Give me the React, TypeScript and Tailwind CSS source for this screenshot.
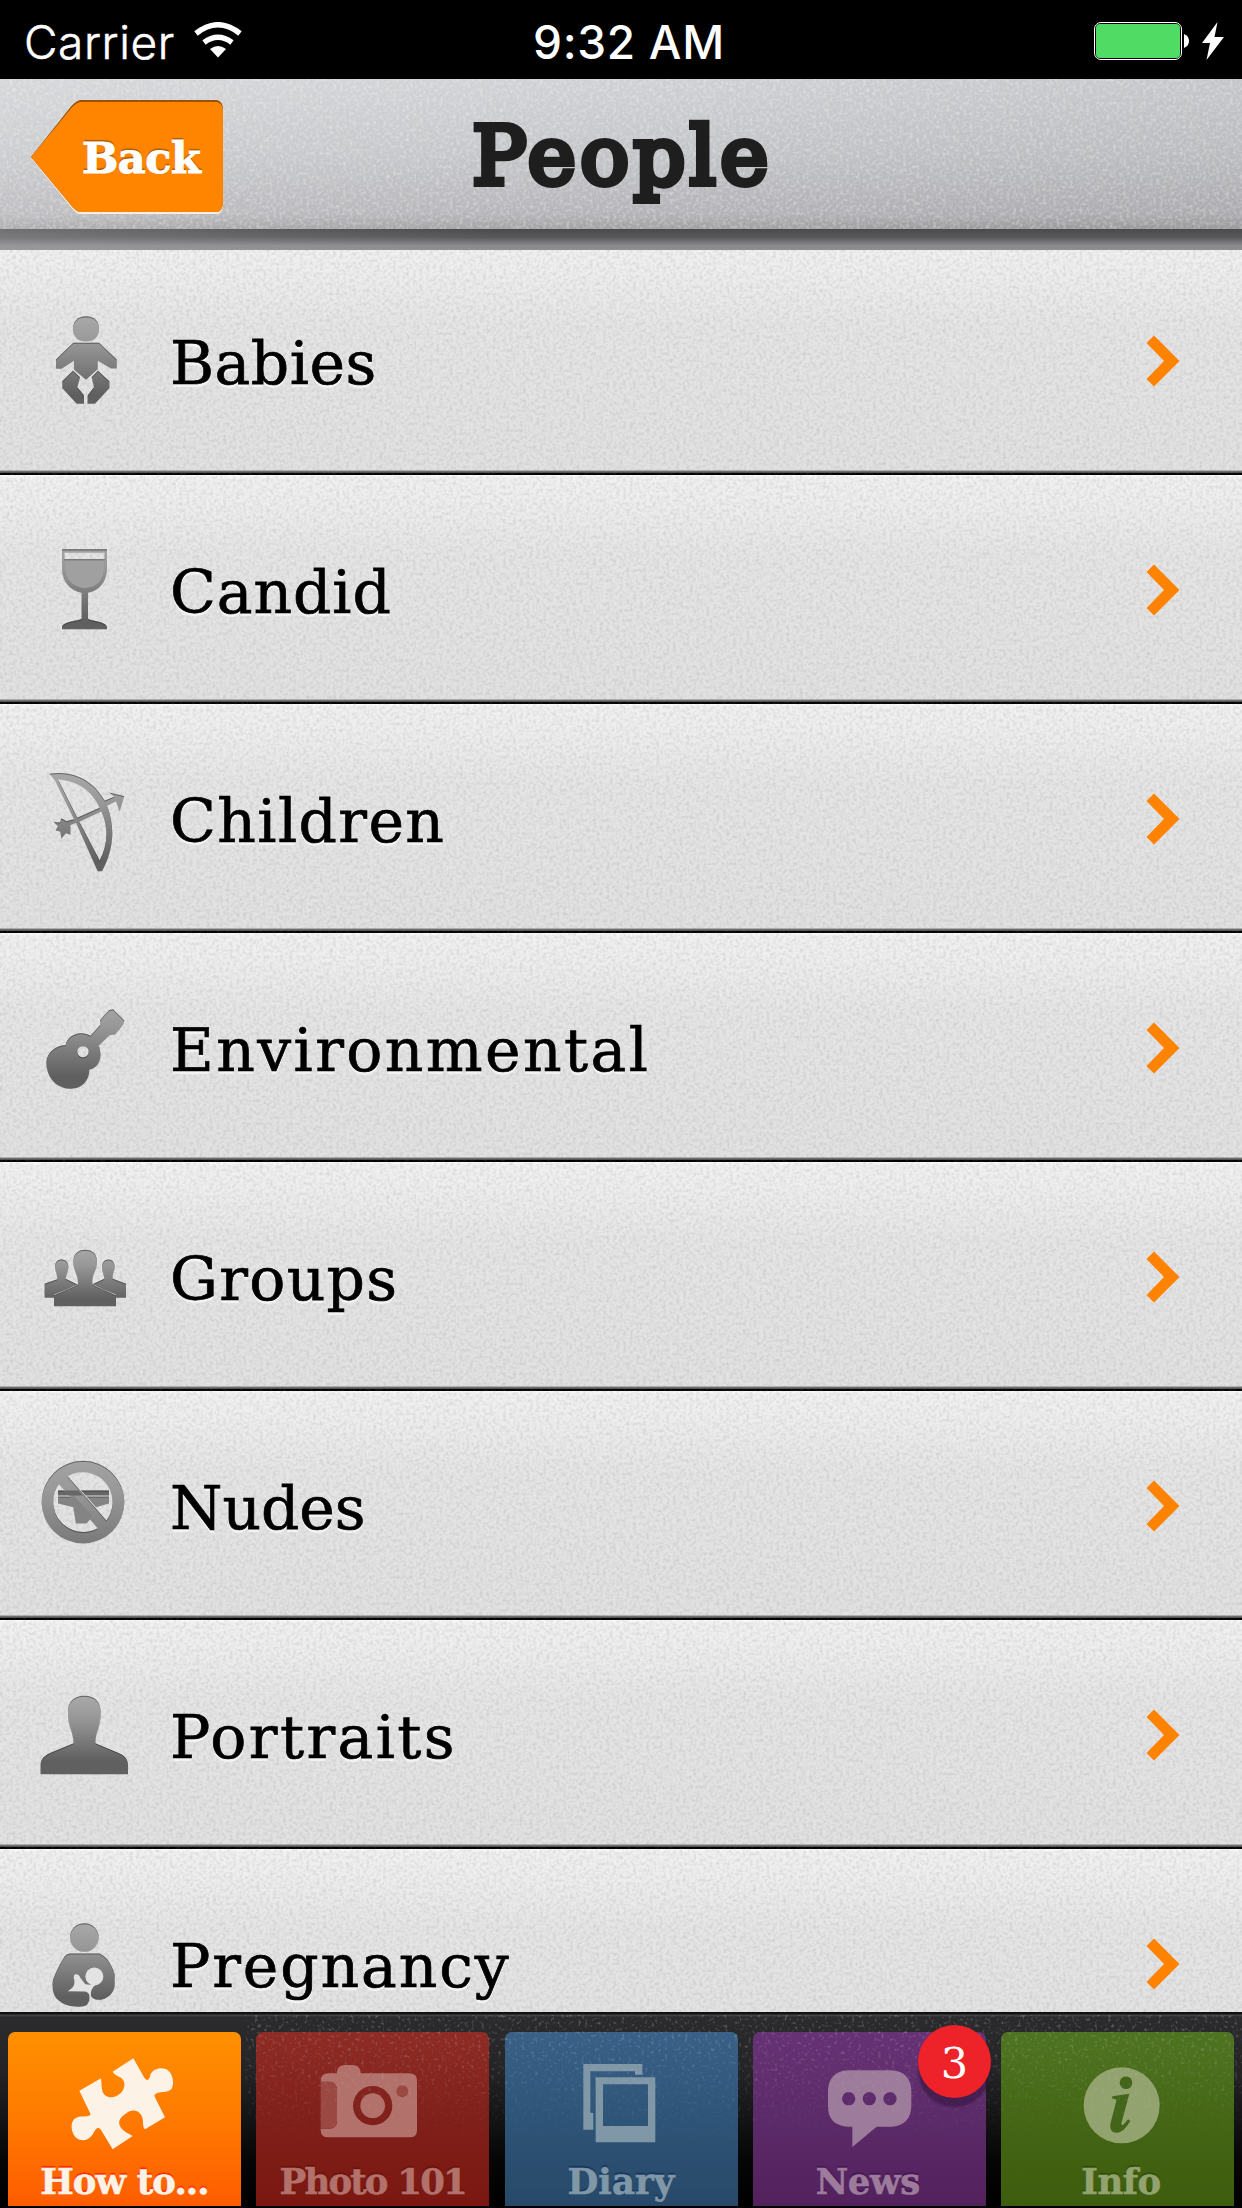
import type { ReactNode } from 'react';

const serif = "font-['DejaVu_Serif','Noto_Serif',serif]";

function Grain({ id, frequency, matrix }: { id: string; frequency: string; matrix: string }) {
  return (
    <svg className="pointer-events-none absolute inset-0 h-full w-full" aria-hidden="true">
      <filter id={id} x="0" y="0" width="100%" height="100%" colorInterpolationFilters="sRGB">
        <feTurbulence type="fractalNoise" baseFrequency={frequency} numOctaves={2} seed={4} />
        <feColorMatrix type="matrix" values={matrix} />
      </filter>
      <rect width="100%" height="100%" filter={`url(#${id})`} />
    </svg>
  );
}

function SharedDefs() {
  return (
    <svg className="absolute h-0 w-0" aria-hidden="true">
      <defs>
        <filter id="inset" x="-10%" y="-10%" width="120%" height="120%" colorInterpolationFilters="sRGB">
          <feOffset in="SourceAlpha" dy="4" result="o" />
          <feComposite in="SourceAlpha" in2="o" operator="out" result="edge" />
          <feFlood floodColor="#222" floodOpacity="0.5" />
          <feComposite in2="edge" operator="in" result="dark" />
          <feMerge>
            <feMergeNode in="SourceGraphic" />
            <feMergeNode in="dark" />
          </feMerge>
        </filter>
      </defs>
    </svg>
  );
}

function RowIcon({ id, y, from, to, children }: { id: string; y: number; from: number; to: number; children: ReactNode }) {
  return (
    <svg className="relative z-10 ml-[30px] h-[100px] w-[100px] shrink-0 overflow-visible" viewBox={`90 ${y} 300 300`}>
      <linearGradient id={id} gradientUnits="userSpaceOnUse" x1="0" x2="0" y1={from} y2={to}>
        <stop offset="0" stopColor="#a9a9a9" />
        <stop offset="0.3" stopColor="#989898" />
        <stop offset="0.9" stopColor="#5f5f5f" />
        <stop offset="1" stopColor="#606060" />
      </linearGradient>
      <g fill={`url(#${id})`} filter="url(#inset)">
        {children}
      </g>
    </svg>
  );
}

const rows = [
  {
    label: 'Babies',
    spacing: 'tracking-[0.5px]',
    icon: (
      <RowIcon id="g1" y={91.5} from={107} to={370}>
        <path d="M258 107C283 107 297 122 297 146C297 169 282 183 258 183C234 183 219 169 219 146C219 122 233 107 258 107Z" />
        <path d="M220 187H297L350 237V264H333L293 241V266L258 298L222 268V241L185 265H168V237Z" />
        <path d="M219 271L240 290L232 320L252 345V370H230L187 323V302Z" />
        <path d="M294 271L275 290L282 320L263 345V370H285L328 323V302Z" />
      </RowIcon>
    ),
  },
  {
    label: 'Candid',
    spacing: 'tracking-[0.9px]',
    icon: (
      <RowIcon id="g2" y={778.5} from={780} to={1045}>
        <path fillRule="evenodd" d="M186 806H321V862C321 905 298 931 264 937V1014C267 1022 321 1022 321 1041V1046H186V1041C186 1022 240 1022 245 1014V937C210 931 186 905 186 862ZM193 817V836H314V817Z" />
        <path d="M196 841H312V868C308 905 285 921 255 923C220 920 199 900 196 868Z" fill="#a0a0a0" />
      </RowIcon>
    ),
  },
  {
    label: 'Children',
    spacing: 'tracking-[1.4px]',
    icon: (
      <RowIcon id="g3" y={85.5} from={97} to={392}>
        <path fillRule="evenodd" d="M148 100C225 88 283 125 314 181L342 169L328 156L373 167L359 213L348 183L321 196C347 263 340 330 306 392H293L228 247L211 254V283L198 278L184 295L181 274L167 270L174 258L162 245L180 246L184 233L200 242L222 236L165 120ZM174 117L232 232L299 202C277 153 235 121 174 117ZM238 244L299 360C325 311 325 258 304 213Z" />
      </RowIcon>
    ),
  },
  {
    label: 'Environmental',
    spacing: 'tracking-[2.4px]',
    icon: (
      <RowIcon id="g4" y={772.5} from={780} to={1035}>
        <path fillRule="evenodd" d="M339 806L373 840C372 857 354 870 346 882L329 884L296 916C308 948 300 982 268 988C268 1020 246 1045 215 1045C168 1045 139 1010 139 965C142 934 168 914 197 914C201 884 242 867 272 886L301 853L300 839L327 809ZM249 917A17 17 0 1 0 249 951A17 17 0 1 0 249 917Z" />
      </RowIcon>
    ),
  },
  {
    label: 'Groups',
    spacing: 'tracking-[1.3px]',
    icon: (
      <RowIcon id="g5" y={49.5} from={110} to={285}>
        <path d="M185 147C199 147 206 158 205 172C204 184 199 192 197 205L232 222L200 237L163 252V262H134V220L172 206C172 190 165 182 165 168C165 155 173 147 185 147Z" />
        <path d="M325 147C338 147 345 158 344 171C343 184 336 190 338 205L378 220V262H348V252L310 237L278 221L313 205C312 192 306 184 306 170C306 157 313 147 325 147Z" />
        <path d="M256 118C279 118 291 132 291 155C291 182 275 190 277 222L348 254V287H162V254L234 222C235 191 220 182 220 155C220 132 233 118 256 118Z" />
      </RowIcon>
    ),
  },
  {
    label: 'Nudes',
    spacing: 'tracking-[-0.1px]',
    icon: (
      <RowIcon id="g6" y={736.5} from={700} to={1180}>
        <path fillRule="evenodd" d="M249 751A124 124 0 1 0 249 999A124 124 0 1 0 249 751ZM249 785A90 90 0 0 1 319 930L203 797A88 88 0 0 1 249 785ZM177 821A90 90 0 0 0 293 953Z" />
        <path d="M174 840H235L248 855H174ZM243 840H327V855H257Z" fill="#666" />
        <path d="M174 858H224L240 876L277 918L260 939H228L220 890L174 879ZM260 858H327V879L288 890Z" fill="#848484" />
      </RowIcon>
    ),
  },
  {
    label: 'Portraits',
    spacing: 'tracking-[2.4px]',
    icon: (
      <RowIcon id="g7" y={73.5} from={107} to={325}>
        <path d="M253 106C285 106 302 125 302 155C303 199 286 215 286 248L350 275C375 285 384 296 384 315V341H122V315C122 296 132 285 156 275L221 248C221 216 203 199 204 155C204 125 221 106 253 106Z" />
      </RowIcon>
    ),
  },
  {
    label: 'Pregnancy',
    spacing: 'tracking-[1.9px]',
    icon: (
      <RowIcon id="g8" y={760.5} from={788} to={1035}>
        <circle cx="253" cy="831" r="43" />
        <path d="M210 879H298C322 887 339 922 344 943V976C342 1000 318 1020 295 1018C283 1018 274 1010 270 1004C270 1017 266 1027 260 1034C240 1043 210 1039 190 1030C164 1015 156 1000 158 965C160 950 178 914 190 895Q197 880 210 879Z" />
        <g fill="#e3e3e3">
          <path d="M223 943C231 939 238 944 241 952L256 971L286 974C275 982 270 995 274 1010L268 1018C270 1006 268 996 256 993L203 992C219 983 228 973 221 951Z" />
          <circle cx="283" cy="948" r="27" />
        </g>
      </RowIcon>
    ),
  },
];

function Row({ label, spacing, icon }: { label: string; spacing: string; icon: ReactNode }) {
  return (
    <li className="flex h-[229px] items-center bg-[linear-gradient(to_bottom,#fdfdfd_0px,#f0f0f0_3px,#eeeeee_25px,#e5e5e5_80px,#e1e1e1_224px,#7d7d7d_225px,#444_227px,#000_227px)]">
      {icon}
      <span
        className={`relative z-10 ml-[40px] pt-[5px] text-[60px] leading-none text-black [-webkit-text-stroke:0.7px_#000] [text-shadow:0_3px_1px_#f4f4f4] ${serif} ${spacing}`}
      >
        {label}
      </span>
      <svg className="relative z-10 mr-[62px] ml-auto h-[52px] w-[34px]" viewBox="0 0 34 52">
        <path d="M8 .5L33.5 26L8 51.500L.5 44L18 26L.5 8Z" fill="#ff8300" />
      </svg>
    </li>
  );
}

function StatusBar() {
  return (
    <div className="flex h-[79px] items-center bg-black font-['Inter',sans-serif] text-[46px] leading-none text-white">
      <div className="flex w-[533px] items-center pt-1 pl-[24px]">
        <span className="w-[170px] font-light tracking-[0.6px] [-webkit-text-stroke:0.5px_#fff]">Carrier</span>
        <svg className="-mt-1 h-[36px] w-[48px]" viewBox="0 0 48 36" fill="none" stroke="#fff">
          <path d="M2 11.500Q24 -6 46 11.500" strokeWidth="5.500" />
          <path d="M10 20.500Q24 10 38 20.500" strokeWidth="5.500" />
          <path d="M16 27Q24 21 32 27L24 35.500Z" fill="#fff" stroke="none" />
        </svg>
      </div>
      <span className="pt-1 font-medium tracking-[0.7px] whitespace-nowrap">9:32 AM</span>
      <div className="mr-[18px] ml-auto flex items-center pt-[3px]">
        <div className="h-[38px] w-[88px] rounded-[7px] border-[1.500px] border-white p-px">
          <div className="h-full w-full rounded-[4px] bg-[#4fdb64]" />
        </div>
        <svg className="ml-[2px] h-[14px] w-[5px]" viewBox="0 0 5 14">
          <path d="M0 0Q5 2 5 7Q5 12 0 14Z" fill="#fff" />
        </svg>
        <svg className="ml-[13px] h-[38px] w-[22px]" viewBox="0 0 22 38">
          <path d="M15.500 0L12.500 15H22L4.500 38L8 21H0Z" fill="#fff" />
        </svg>
      </div>
    </div>
  );
}

function Header() {
  return (
    <header className="relative z-20 h-[171px]">
      <div className="relative h-[150px] overflow-hidden bg-[linear-gradient(to_bottom,#d0d1d4,#c4c5c8_50%,#b4b4b8_90%,#a1a1a4)]">
        <div className="absolute inset-0 bg-[linear-gradient(to_right,rgba(255,255,255,0.15),transparent_50%,rgba(0,0,0,0.05))]" />
        <Grain id="metal" frequency="0.3" matrix="0 0 0 0 1  0 0 0 0 1  0 0 0 0 1  0.800 0 0 0 -0.340" />
        <div className="relative grid h-full grid-cols-[1fr_auto_1fr]">
          <button className="relative mt-[21px] ml-[31px] h-[114px] w-[192px] text-left">
            <svg className="absolute inset-0" width="192" height="114" viewBox="0 0 192 114">
              <path d="M49 2H186Q192 3 192 10V106Q191 113 186 114H49Q44 113 39 106L0 58L38 10Q43 3 49 2Z" fill="#f7efe4" />
              <path d="M49 0H186Q192 2 192 9V104Q191 111 186 112H49Q44 111 39 104L0 57L38 9Q43 2 49 0Z" fill="#9a5200" />
              <path d="M49 2H186Q192 4 192 11V104Q191 111 186 112H49Q44 111 39 104L0 57L38 11Q43 4 49 2Z" fill="#ff8501" />
            </svg>
            <span
              className={`relative block pt-[2px] pl-[51px] text-[43px] font-bold tracking-[-0.5px] text-white [-webkit-text-stroke:1px_#fff] [text-shadow:0_-2px_1px_rgba(120,60,0,0.6)] ${serif}`}
            >
              Back
            </span>
          </button>
          <h1 className={`pt-[20px] pl-[3px] text-[81px] leading-[114px] font-normal tracking-[4.500px] text-[#1e1e1e] [-webkit-text-stroke:6.200px_#1e1e1e] ${serif}`}>People</h1>
          <span />
        </div>
      </div>
      <div className="relative h-[21px] bg-[linear-gradient(to_bottom,#4a4a4c,#59595b_40%,#8b8b8d_80%,#8e8e90)]">
        <div className="h-full bg-[linear-gradient(to_right,rgba(170,170,172,0.4),transparent_40%)]" />
      </div>
    </header>
  );
}

const tabs = [
  {
    label: 'How to...',
    box: '24 96 699 360',
    tone: 'bg-[linear-gradient(to_bottom,#ff9000,#ff7a00_50%,#ff5c00)]',
    ink: 'text-[#fcf3e6] [text-shadow:0_-2px_1px_#ff2a00]',
    spacing: 'tracking-[-0.900px]',
    icon: (
      <path d="M238 272L303 235C306 256 303 276 315 286C342 305 378 275 373 248C368 226 346 232 338 215L400 175L430 228C440 248 449 240 451 225C460 203 490 200 505 212C521 225 522 255 515 266C498 284 470 268 463 288L495 352L435 388C426 380 432 365 426 350C415 325 390 330 380 339C359 352 352 365 362 382C370 395 385 400 398 408L338 448L303 390C290 374 284 395 277 405C262 425 240 425 225 410C213 395 211 370 222 358C240 342 265 356 272 343Z" />
    ),
  },
  {
    label: 'Photo 101',
    box: '768 96 699 360',
    tone: 'bg-[linear-gradient(to_bottom,#8e2b25,#80201a_50%,#7a1710)]',
    ink: 'text-[#b2716a] [text-shadow:0_-2px_1px_#6d120c]',
    spacing: 'tracking-[-1.800px]',
    icon: (
      <>
        <path fillRule="evenodd" d="M1011 220Q1011 195 1035 195H1060Q1082 197 1082 220H1230Q1251 222 1251 243V392Q1250 411 1230 412H985Q963 411 962 392V386H990Q1011 384 1011 362V270Q1010 246 990 245H962Q962 220 985 220ZM1118 258A59 59 0 1 0 1118 376A59 59 0 1 0 1118 258Z" />
        <circle cx="1118" cy="317" r="37" />
        <circle cx="1207" cy="274" r="18" fill="#9b4842" />
        <path d="M962 245H990Q1011 246 1011 270V362Q1010 386 990 386H962Z" fill="#9b4842" />
      </>
    ),
  },
  {
    label: 'Diary',
    box: '45 96 699 360',
    tone: 'bg-[linear-gradient(to_bottom,#3a6087,#2e5477_50%,#284969)]',
    ink: 'text-[#7f97a6] [text-shadow:0_-2px_1px_#183461]',
    spacing: 'tracking-[0.1px]',
    icon: <path fillRule="evenodd" d="M280 192H457V224H435V214H301V338H310V389H280ZM317 232H496V427H317ZM339 253V378H474V253Z" />,
  },
  {
    label: 'News',
    box: '789 96 699 360',
    tone: 'bg-[linear-gradient(to_bottom,#673274,#5b2a68_50%,#53225d)]',
    ink: 'text-[#9d7b9b] [text-shadow:0_-2px_1px_#451357]',
    spacing: 'tracking-[-0.4px] pr-[3px]',
    icon: (
      <path
        fillRule="evenodd"
        d="M1075 211H1203Q1264 215 1264 275V318Q1262 378 1203 380H1160L1087 441V380H1075Q1014 378 1014 318V275Q1014 215 1075 211ZM1076 276A20 20 0 1 0 1076 316A20 20 0 1 0 1076 276ZM1138 276A20 20 0 1 0 1138 316A20 20 0 1 0 1138 276ZM1200 276A20 20 0 1 0 1200 316A20 20 0 1 0 1200 276Z"
      />
    ),
  },
  {
    label: 'Info',
    box: '303 96 699 360',
    tone: 'bg-[linear-gradient(to_bottom,#4f7421,#446615_50%,#3e5d0e)]',
    ink: 'text-[#93a36f] [text-shadow:0_-2px_1px_#304d08]',
    spacing: 'tracking-[-0.5px] pl-[7px]',
    icon: (
      <>
        <circle cx="665" cy="316" r="114" />
        <g fill="#43651a">
          <circle cx="678" cy="248" r="19" />
          <path d="M637 289L688 281L665 367C662 380 670 378 684 358L691 362C676 388 664 397 650 398C633 398 628 384 632 368L649 302Q649 295 636 296Z" />
        </g>
      </>
    ),
  },
];

function TabBar() {
  return (
    <nav className="relative h-[196px] bg-[linear-gradient(to_bottom,#111_0px,#111_2px,#4a4a4c_3px,#2b2b2d_5px,#242426_30%,#060607_75%,#000)]">
      <div className="flex justify-between px-2 pt-5">
        {tabs.map((t) => (
          <div key={t.label} className={`h-[174px] w-[233px] rounded-t-[7px] text-center ${t.tone} ${t.ink}`}>
            <svg className="h-[120px] w-[233px]" viewBox={t.box} fill="currentColor">
              {t.icon}
            </svg>
            <span className={`block text-[35.500px] leading-[59px] font-bold whitespace-nowrap [-webkit-text-stroke:0.6px_currentColor] ${serif} ${t.spacing}`}>{t.label}</span>
          </div>
        ))}
      </div>
      <div className="absolute inset-x-0 top-[3px] h-[130px] [mask-image:linear-gradient(to_bottom,black,transparent)]">
        <div className="absolute inset-y-0 right-0 left-[245px]">
          <Grain id="specks" frequency="0.3" matrix="0 0 0 0 .8  0 0 0 0 .85  0 0 0 0 .9  1.100 0 0 0 -0.620" />
        </div>
      </div>
      <div
        className={`absolute top-[13px] left-[918px] h-[73px] w-[73px] rounded-full bg-[#ee2229] text-center text-[43px] leading-[76px] text-white shadow-[0_9px_2px_rgba(50,20,60,0.55)] ${serif}`}
      >
        3
      </div>
    </nav>
  );
}

export default function App() {
  return (
    <div className="flex h-[2208px] w-[1242px] flex-col overflow-hidden bg-black">
      <SharedDefs />
      <StatusBar />
      <Header />
      <main className="relative -mt-1 h-[1766px] overflow-hidden">
        <ul>
          {rows.map((r) => (
            <Row key={r.label} {...r} />
          ))}
        </ul>
        <Grain id="paper" frequency="0.3" matrix="0 0 0 0 0.450  0 0 0 0 0.450  0 0 0 0 0.450  0.400 0 0 0 -0.160" />
      </main>
      <TabBar />
    </div>
  );
}
